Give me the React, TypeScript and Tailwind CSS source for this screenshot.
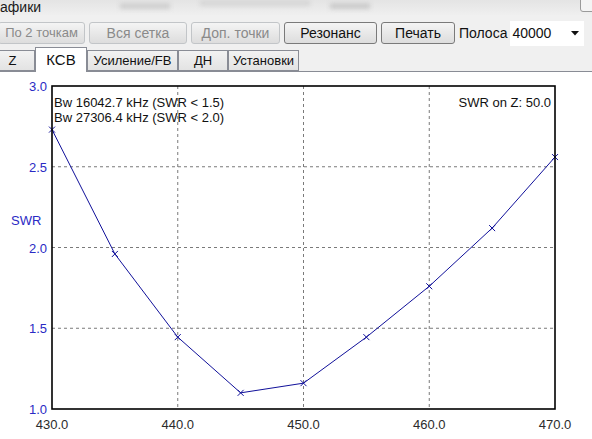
import React from "react";

const font = { fontFamily: '"Liberation Sans", Arial, sans-serif' };

// plot frame in page pixels
const X0 = 52;
const X1 = 555;
const Y0 = 86;
const Y1 = 409;

const fx = (f: number) => X0 + ((f - 430) / 40) * (X1 - X0);
const fy = (s: number) => Y1 - ((s - 1) / 2) * (Y1 - Y0);

const points: [number, number][] = [
  [430, 2.73],
  [435, 1.96],
  [440, 1.445],
  [445, 1.1],
  [450, 1.16],
  [455, 1.445],
  [460, 1.76],
  [465, 2.12],
  [470, 2.56],
];

function Btn({ label, disabled, w }: { label: string; disabled?: boolean; w: string }) {
  return (
    <div
      className={`${w} flex h-[22px] items-center justify-center rounded-[3px] border bg-gradient-to-b from-[#f4f4f4] to-[#dddddd] ${
        disabled ? "border-[#c2c5c8] text-[#8a8a8a]" : "border-[#7a7a7a] text-[#111]"
      }`}
    >
      {label}
    </div>
  );
}

function Tab({ label, active, w }: { label: string; active?: boolean; w: string }) {
  if (active)
    return (
      <div className={`${w} -mb-px flex h-[25px] items-center justify-center border border-b-0 border-[#898c95] bg-white text-[15px] text-[#111]`}>
        {label}
      </div>
    );
  return (
    <div className={`${w} flex h-[21px] items-center justify-center border border-[#898c95] bg-gradient-to-b from-[#f2f2f2] to-[#e3e3e3] text-[13px] text-[#111]`}>
      {label}
    </div>
  );
}

function Chart() {
  const grid = "#7a7a7a";
  const poly = points.map(([f, s]) => `${fx(f)},${fy(s)}`).join(" ");
  return (
    <svg width={592} height={367} viewBox="0 72 592 367" className="block" style={font}>
      <rect x={0} y={72} width={592} height={367} fill="#fff" />
      {[440, 450, 460].map((f) => (
        <line key={f} x1={fx(f)} x2={fx(f)} y1={Y0} y2={Y1} stroke={grid} strokeDasharray="3 3" />
      ))}
      {[2.5, 2.0, 1.5].map((s) => (
        <line key={s} x1={X0} x2={X1} y1={fy(s)} y2={fy(s)} stroke={grid} strokeDasharray="3 3" />
      ))}
      <polyline points={poly} fill="none" stroke="#10109a" strokeWidth={1} />
      {points.map(([f, s]) => {
        const x = fx(f);
        const y = fy(s);
        return (
          <g key={f} stroke="#10109a" strokeWidth={1}>
            <line x1={x - 3} y1={y - 3} x2={x + 3} y2={y + 3} />
            <line x1={x - 3} y1={y + 3} x2={x + 3} y2={y - 3} />
          </g>
        );
      })}
      <rect x={X0} y={Y0} width={X1 - X0} height={Y1 - Y0} fill="none" stroke="#000" strokeWidth={1.6} />
      {[3.0, 2.5, 2.0, 1.5, 1.0].map((s) => (
        <text key={s} x={47} y={fy(s) + 5} textAnchor="end" fontSize={13} fill="#2a2ac4">
          {s.toFixed(1)}
        </text>
      ))}
      <text x={11} y={225} fontSize={13} fill="#2a2ac4">
        SWR
      </text>
      {[430, 440, 450, 460, 470].map((f) => (
        <text key={f} x={fx(f)} y={429} textAnchor="middle" fontSize={13} fill="#2b2b2b">
          {f.toFixed(1)}
        </text>
      ))}
      <text x={54} y={107} fontSize={13} fill="#111">
        Bw 16042.7 kHz (SWR &lt; 1.5)
      </text>
      <text x={54} y={122} fontSize={13} fill="#111">
        Bw 27306.4 kHz (SWR &lt; 2.0)
      </text>
      <text x={551} y={107} textAnchor="end" fontSize={13} fill="#111">
        SWR on Z: 50.0
      </text>
    </svg>
  );
}

export default function App() {
  return (
    <div className="h-[439px] w-[592px] overflow-hidden bg-[#f0f0f0]" style={font}>
      {/* title strip, blurred */}
      <div className="relative h-[15px] overflow-hidden bg-gradient-to-b from-[#e4e4e4] to-[#efefef]">
        <span className="absolute left-0 top-[-3px] text-[14px] text-[#1a1a1a]">афики</span>
        <div className="absolute left-[120px] top-[3px] h-[6px] w-[50px] bg-[#cfcfcf] blur-[2px]" />
        <div className="absolute left-[330px] top-[3px] h-[6px] w-[40px] bg-[#cbcbcb] blur-[2px]" />
        <div className="absolute left-[200px] top-[0px] h-[6px] w-[110px] bg-[#d6d6d6] blur-[2px]" />
        <div className="absolute left-[580px] top-[-6px] h-[18px] w-[30px] rounded-[3px] border border-[#9a9a9a] bg-[#f4f4f4]" />
      </div>

      {/* toolbar */}
      <div className="flex h-[33px] items-center pt-[3px]">
        <div className="ml-[-2px] flex items-center gap-[4px] text-[14px]">
          <Btn label="По 2 точкам" disabled w="w-[87px] text-[13px]" />
          <Btn label="Вся сетка" disabled w="w-[98px]" />
          <Btn label="Доп. точки" disabled w="w-[89px]" />
          <Btn label="Резонанс" w="w-[93px]" />
          <Btn label="Печать" w="w-[74px]" />
        </div>
        <span className="ml-[4px] text-[14px] text-[#111]">Полоса</span>
        <div className="ml-[3px] flex h-[25px] w-[74px] items-center justify-between bg-white pl-[2px] pr-[5px] text-[14px] text-[#111]">
          <span>40000</span>
          <svg width="8" height="5" viewBox="0 0 8 5">
            <path d="M0 0h8L4 4.5z" fill="#111" />
          </svg>
        </div>
      </div>

      {/* tabs */}
      <div className="flex h-[24px] items-end border-b border-[#898c95]">
        <div className="ml-[-10px] flex items-end">
          <Tab label="Z" w="w-[45px]" />
          <Tab label="КСВ" active w="w-[52px]" />
          <Tab label="Усиление/FB" w="w-[91px]" />
          <Tab label="ДН" w="w-[50px]" />
          <Tab label="Установки" w="w-[71px]" />
        </div>
      </div>

      <Chart />
    </div>
  );
}
